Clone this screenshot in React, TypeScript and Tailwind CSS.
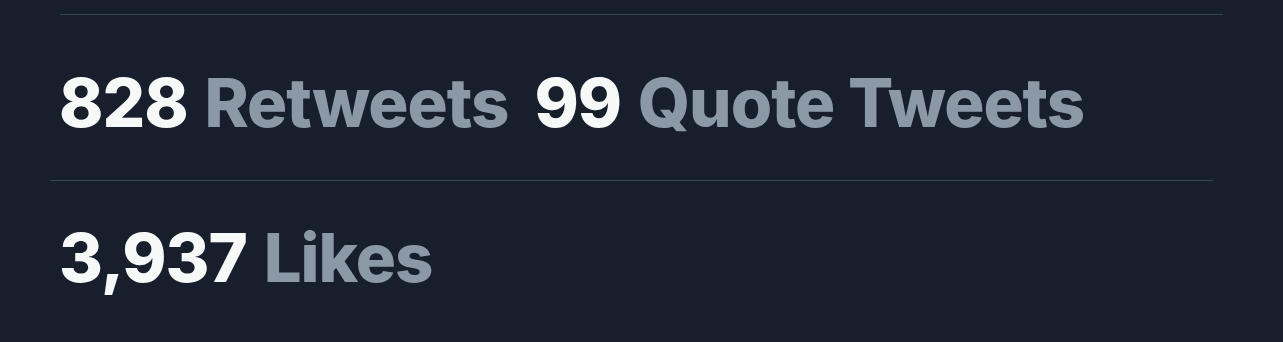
import React from "react";

const Stat: React.FC<{ value: string; label: string; className?: string }> = ({
  value,
  label,
  className,
}) => {
  return (
    <span className={className}>
      <span className="text-[#f7f9f9]">{value}</span>{" "}
      <span className="ml-[3px] text-[#8b98a5]">{label}</span>
    </span>
  );
};

export default function App() {
  return (
    <div
      className="w-[1283px] h-[342px] bg-[#161f2b] overflow-hidden font-extrabold text-[67px] leading-none tracking-[-1px]"
      style={{ fontFamily: "Inter, 'Liberation Sans', sans-serif" }}
    >
      <div className="ml-[60px] mr-[60px] mt-[14px] border-t border-[#38444d]" />
      <div className="flex items-baseline pl-[59px] pt-[54px] pb-[44px]">
        <Stat value="828" label="Retweets" className="mr-[26px]" />
        <Stat value="99" label="Quote Tweets" />
      </div>
      <div className="ml-[50px] mr-[70px] border-t border-[#38444d]" />
      <div className="flex items-baseline pl-[59px] pt-[43px]">
        <Stat value="3,937" label="Likes" />
      </div>
    </div>
  );
}
